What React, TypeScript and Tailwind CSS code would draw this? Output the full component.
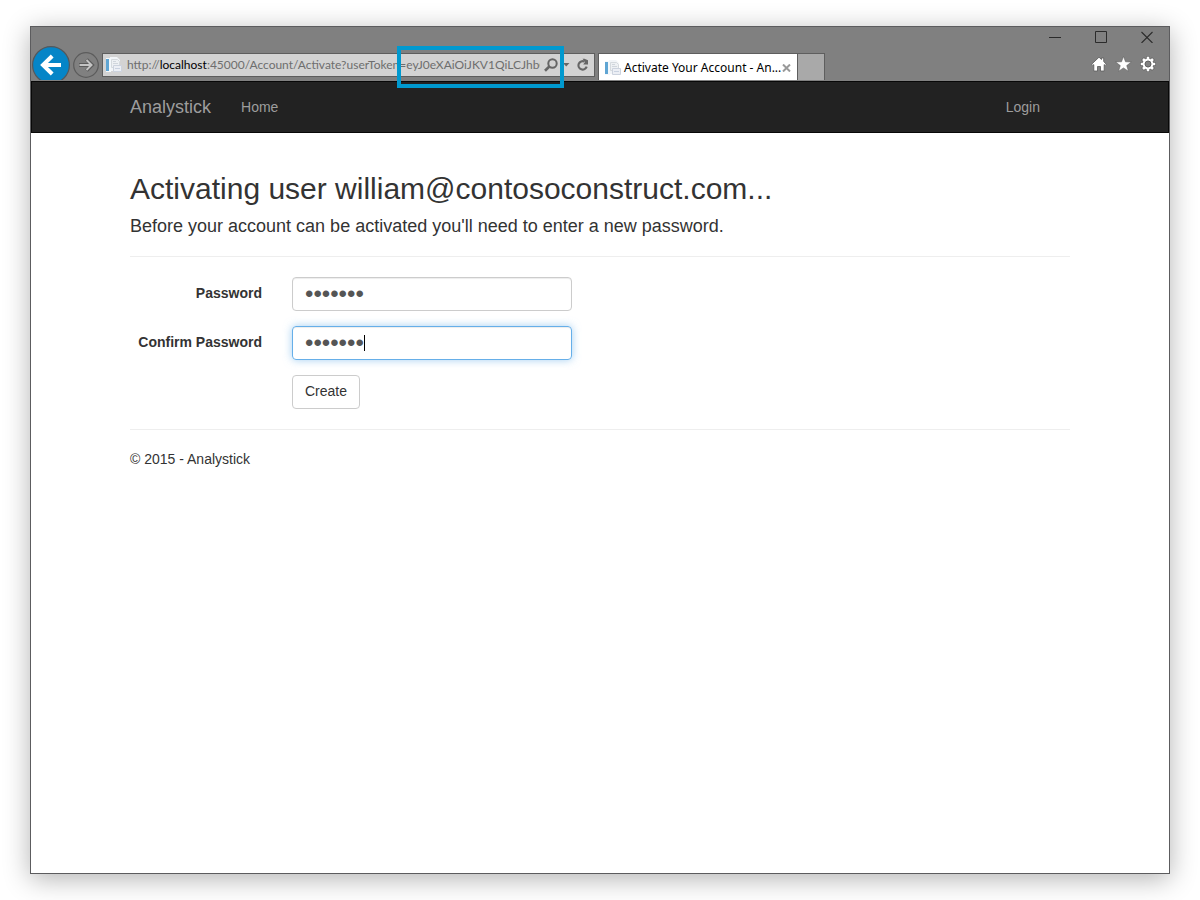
import React, { useState } from "react";

function PageIcon() {
  return (
    <svg width="16" height="16" viewBox="0 0 16 16" className="shrink-0" aria-hidden="true">
      <path d="M4 0h7l3 3v11H4z" fill="#f2f5f8" />
      <path d="M5.500 2.500h6l2 2v6h-8z" fill="#eef1f4" stroke="#d5dade" />
      <rect x="0" y="1" width="5" height="14" fill="#f4f8fb" />
      <rect x="0" y="2" width="3" height="12" fill="#5fa5d3" />
      <path d="M7 4.500h3M7 6.500h5" stroke="#d0d6dc" />
      <path d="M7.500 8.500h8v6h-8z" fill="#eceff5" stroke="#ccd3de" />
      <path d="M9 11.500h5" stroke="#c9d2e0" />
    </svg>
  );
}

function WindowControls() {
  return (
    <div className="flex h-[19px] justify-end gap-[34px] pr-4 pt-1 text-[#2b2b2b]">
      <button type="button" aria-label="Minimize" className="size-3">
        <svg width="12" height="12" viewBox="0 0 12 12"><path d="M0 6.5h12" stroke="currentColor" /></svg>
      </button>
      <button type="button" aria-label="Maximize" className="size-3">
        <svg width="12" height="12" viewBox="0 0 12 12"><path d="M.5.5h11v11H.5z" fill="none" stroke="currentColor" /></svg>
      </button>
      <button type="button" aria-label="Close" className="size-3">
        <svg width="12" height="12" viewBox="0 0 12 12"><path d="M.5 1l11 11M11.5 1l-11 11" fill="none" stroke="currentColor" strokeWidth="1.1" /></svg>
      </button>
    </div>
  );
}

function AddressBar() {
  return (
    <div className="relative mt-[7px] flex h-6 w-[493px] items-center border border-[#5e5e5e] bg-[#d3d3d3] pl-[3px] text-[#666]">
      <PageIcon />
      <div
        role="textbox"
        aria-label="Address"
        contentEditable
        suppressContentEditableWarning
        className="ml-[5px] w-[413px] overflow-hidden text-[12px] leading-5 whitespace-nowrap text-[#6e6e6e] outline-none"
      >
        http://<span className="text-black">localhost</span>:45000/Account/Activate?userToken=eyJ0eXAiOiJKV1QiLCJhbG
      </div>
      <button type="button" aria-label="Search" className="ml-1 shrink-0">
        <svg width="14" height="14" viewBox="0 0 14 14" fill="none" stroke="currentColor">
          <circle cx="8.5" cy="5.5" r="4.200" strokeWidth="2" />
          <path d="M5.6 8.3L1 12.8" strokeWidth="2.600" />
        </svg>
      </button>
      <button type="button" aria-label="Show address history" className="ml-1 shrink-0">
        <svg width="8" height="4" viewBox="0 0 8 4"><path d="M1 0h6.500L4.200 3.600z" fill="currentColor" /></svg>
      </button>
      <button type="button" aria-label="Refresh" className="ml-[7px] shrink-0">
        <svg width="12" height="14" viewBox="0 0 12 14" fill="none">
          <path d="M7.500 3.600A4.200 4.200 0 1 0 9.700 8.600" stroke="currentColor" strokeWidth="2.100" />
          <path d="M5.500.8h2L11 2.200V6.600H6.200L8 4z" fill="currentColor" />
        </svg>
      </button>
      <div className="pointer-events-none absolute -top-2 left-[294px] z-10 h-[42px] w-[167px] border-4 border-[#0099cf]" />
    </div>
  );
}

function BrowserChrome() {
  return (
    <header className="bg-[#808080] font-[Lato,sans-serif]">
      <WindowControls />
      <div className="flex h-[35px] items-start pl-px">
        <div className="h-[34px] shrink-0 overflow-hidden">
          <button type="button" aria-label="Back" className="block size-[38px]">
            <svg width="38" height="38" viewBox="0 0 38 38" fill="none">
              <circle cx="19" cy="19" r="18.4" fill="#0585c7" stroke="#55585b" strokeWidth="1.2" />
              <path d="M29 19H12M20.2 10L11 19l9.200 9" stroke="#fff" strokeWidth="4" />
            </svg>
          </button>
        </div>
        <button type="button" aria-label="Forward" className="ml-[3px] mt-[6px] size-[26px] shrink-0">
          <svg width="26" height="26" viewBox="0 0 26 26" fill="none">
            <circle cx="13" cy="13" r="12.300" stroke="#5b5b5b" strokeWidth="1.2" />
            <path d="M6 13h12M13.500 7.500L19 13l-5.500 5.500" stroke="#5b5b5b" strokeWidth="3.800" />
            <path d="M6.500 13H18M13.500 8L18.500 13l-5 5" stroke="#c4c4c4" strokeWidth="2" />
          </svg>
        </button>
        <div className="ml-[3px] shrink-0"><AddressBar /></div>
        <div className="ml-[3px] mt-[7px] flex h-[27px] shrink-0 text-black">
          <div className="flex w-[200px] items-center border-x border-t border-[#5e5e5e] bg-white pt-px pl-[6px]">
            <PageIcon />
            <span className="ml-[3px] w-[158px] font-['Noto_Sans',sans-serif] text-[12px] leading-5 whitespace-nowrap">Activate Your Account - An...</span>
            <button type="button" aria-label="Close tab" className="shrink-0">
              <svg width="9" height="8" viewBox="0 0 9 8"><path d="M1 .5l7 7M8 .5l-7 7" stroke="#999" strokeWidth="2" /></svg>
            </button>
          </div>
          <button type="button" aria-label="New tab" className="w-[27px] border-t border-r border-[#5e5e5e] bg-[#a9a9a9]" />
        </div>
        <div className="mr-[13px] ml-auto mt-[10px] flex gap-2">
          <button type="button" aria-label="Home page">
            <svg width="16" height="16" viewBox="0 0 16 16">
              <path d="M8 1.200L10.500 3.500V2h2.200v3.600L15.300 8.200l-1.100 1.200-1-.8V15H9.500v-4.500h-3V15H2.800V8.600l-1 .8L.7 8.200z" fill="#fff" stroke="#595959" strokeWidth=".8" />
            </svg>
          </button>
          <button type="button" aria-label="Favorites">
            <svg width="17" height="16" viewBox="0 0 17 16">
              <path d="M8.500.5l2 5.300 5.800.2-4.600 3.600 1.700 5.600-4.900-3.300-4.900 3.300 1.700-5.600L.7 6l5.800-.2z" fill="#fff" stroke="#595959" strokeWidth=".5" />
            </svg>
          </button>
          <button type="button" aria-label="Tools">
            <svg width="16" height="16" viewBox="0 0 16 16" fill="none">
              <g stroke="#595959" strokeWidth="4"><path d="M8 .4v15.200M.4 8h15.200M2.600 2.600l10.800 10.800M13.400 2.600L2.600 13.400" /></g>
              <g stroke="#fff" strokeWidth="2.600"><path d="M8 .8v14.400M.8 8h14.400M3 3l10 10M13 3L3 13" /></g>
              <circle cx="8" cy="8" r="4.300" fill="#808080" stroke="#fff" strokeWidth="2.200" />
              <circle cx="8" cy="8" r="3" stroke="#595959" strokeWidth=".8" />
            </svg>
          </button>
        </div>
      </div>
    </header>
  );
}

function PasswordField({ id, label, active = false }: { id: string; label: string; active?: boolean }) {
  const [value, setValue] = useState("account");
  return (
    <>
      <label htmlFor={id} className="pt-[6px] text-right font-bold">{label}</label>
      <div className="relative">
        <input
          id={id}
          type="password"
          value={value}
          onChange={(e) => setValue(e.target.value)}
          className={
            "block h-[34px] w-full rounded border px-3 text-[24px] text-[#555] outline-none " +
            (active
              ? "border-[#66afe9] shadow-[inset_0_1px_1px_rgba(0,0,0,0.075),0_0_8px_rgba(102,175,233,0.6)]"
              : "border-[#ccc] shadow-[inset_0_1px_1px_rgba(0,0,0,0.075)]")
          }
        />
        {active && <span className="pointer-events-none absolute top-[9px] left-[72px] h-4 w-px bg-black" />}
      </div>
    </>
  );
}

export default function App() {
  return (
    <div className="flex min-h-screen flex-col bg-white px-[30px] py-[26px]">
      <div className="flex grow flex-col border border-[#5c5c5e] bg-white font-['Liberation_Sans',Arial,sans-serif] text-[14px] leading-5 text-[#333] shadow-[0_5px_25px_rgba(0,0,0,0.3)]">
        <BrowserChrome />
        <nav className="border border-[#080808] bg-[#222] text-[#9d9d9d]">
          <div className="mx-auto flex h-[50px] max-w-[970px] items-center px-[15px]">
            <a href="#" className="text-[18px]">Analystick</a>
            <a href="#" className="ml-[30px]">Home</a>
            <a href="#" className="mr-[30px] ml-auto">Login</a>
          </div>
        </nav>
        <main className="mx-auto w-full max-w-[970px] px-[15px] pt-[39px]">
          <h2 className="text-[30px] leading-[33px]">Activating user william@contosoconstruct.com...</h2>
          <h4 className="mt-[11px] text-[18px] leading-5">Before your account can be activated you'll need to enter a new password.</h4>
          <hr className="my-5 border-[#eee]" />
          <form onSubmit={(e) => e.preventDefault()} className="grid grid-cols-[132px_280px] gap-x-[30px] gap-y-[15px]">
            <PasswordField id="password" label="Password" />
            <PasswordField id="confirm" label="Confirm Password" active />
            <button type="submit" className="col-start-2 h-[34px] justify-self-start rounded border border-[#ccc] bg-white px-3 pb-[2px]">
              Create
            </button>
          </form>
          <hr className="mt-5 mb-[19px] border-[#eee]" />
          <footer>
            <p>© 2015 - Analystick</p>
          </footer>
        </main>
      </div>
    </div>
  );
}
